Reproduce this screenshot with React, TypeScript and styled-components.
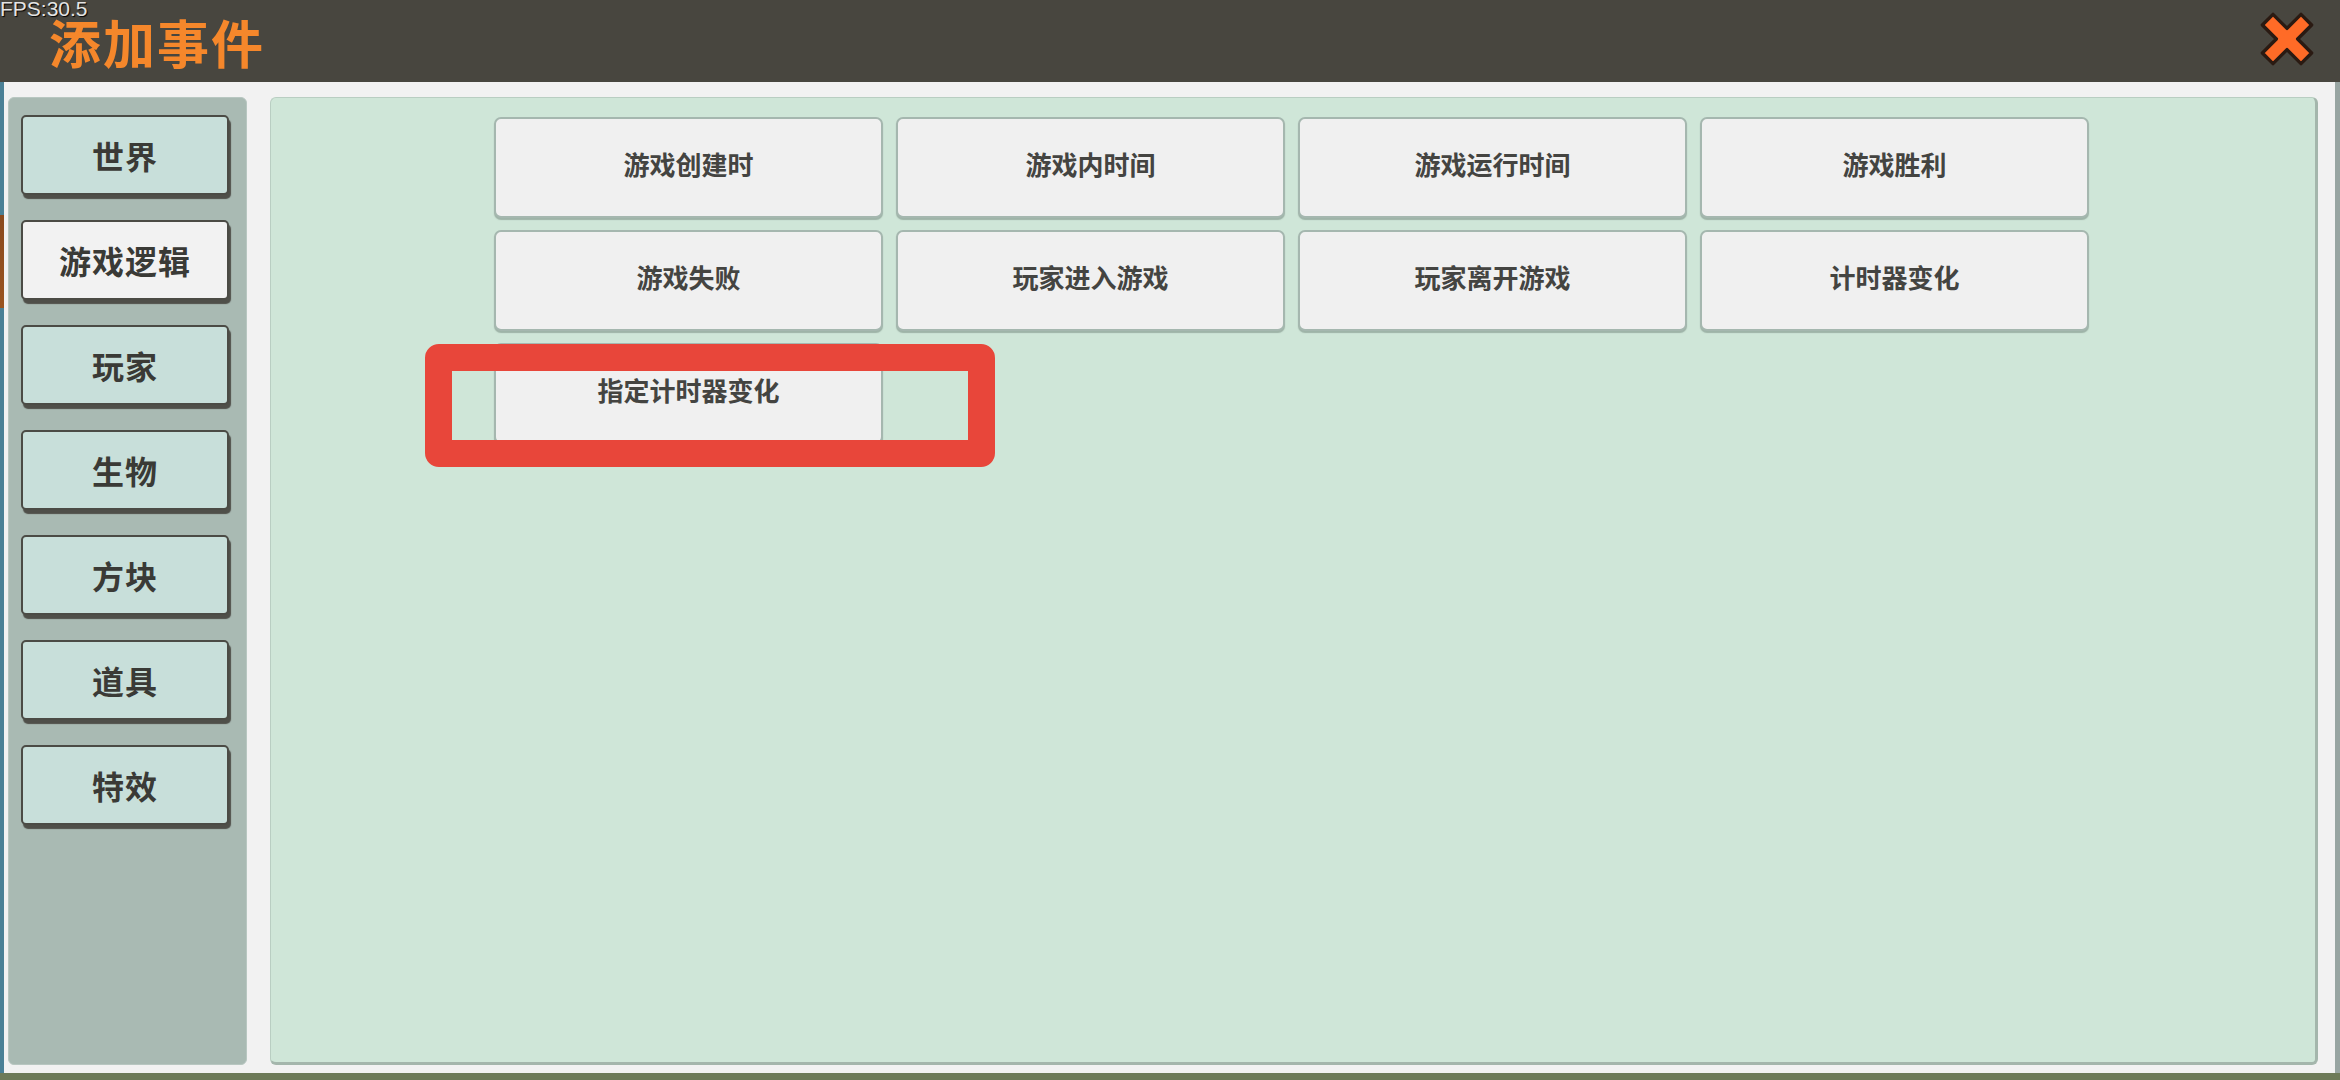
import React from 'react';
import styled, { createGlobalStyle } from 'styled-components';

const GlobalStyle = createGlobalStyle`
  html, body {
    margin: 0;
    padding: 0;
  }
  body {
    width: 2340px;
    height: 1080px;
    overflow: hidden;
    font-family: "Noto Sans CJK SC", "Noto Sans", sans-serif;
  }
`

const Page = styled.div`
  position: relative;
  width: 2340px;
  height: 1080px;
  display: flex;
  flex-direction: column;

  background:
    linear-gradient(to bottom, transparent 1073px, #6d7a58 1073px),
    linear-gradient(to right, transparent 2335px, #98a5a2 2335px),
    linear-gradient(to bottom, #4a8096 0, #4a8096 215px, #8a4a1e 215px, #9a5420 308px, #4a8096 308px);
`

const Fps = styled.div`
  position: absolute;
  left: 0;
  top: -2px;

  font-family: "Liberation Sans", Arial, sans-serif;
  font-size: 21px;
  line-height: 1;
  color: #e4e4e4;
  text-shadow: 1px 1px 1px #000;
`

const Header = styled.div`
  height: 82px;
  flex-shrink: 0;
  display: flex;
  align-items: center;
  justify-content: space-between;
  padding: 0 25px 0 49px;
  box-sizing: border-box;

  background-color: #48463f;
`

const Title = styled.div`
  font-size: 52px;
  font-weight: 700;
  line-height: 0.75;
  letter-spacing: 2px;
  color: #f5872b;
`

const CloseBtn = styled.svg`
  width: 56px;
  height: 58px;
  margin-top: -4px;
`

const Frame = styled.div`
  flex: 1;
  display: flex;
  gap: 23px;
  margin: 0 5px 7px 4px;
  padding: 15px 17px 8px 4px;

  background-color: #f2f2f2;
`

const SidePanel = styled.div`
  width: 239px;
  flex-shrink: 0;
  display: flex;
  flex-direction: column;
  gap: 25px;
  padding: 17px 0 0 12px;
  box-sizing: border-box;

  background-color: #a9bab3;
  border: 1px solid #b8c7c1;
  border-radius: 6px;
`

const SideButton = styled.div<{ $active?: boolean }>`
  width: 208px;
  height: 80px;
  display: flex;
  align-items: center;
  justify-content: center;
  box-sizing: border-box;

  background-color: ${p => (p.$active ? '#f2f2f2' : '#c8dfda')};
  border: 2px solid #4b4b45;
  border-radius: 5px;
  box-shadow: 2px 4px 1px #4f4f49;

  font-size: 32px;
  font-weight: 700;
  color: #3a3a36;
  letter-spacing: 1px;
`

const Content = styled.div`
  position: relative;
  flex: 1;
  padding: 19px 0 0 223px;
  box-sizing: border-box;

  background-color: #cfe6d8;
  border: 1px solid #b9cec2;
  border-right: 3px solid #a4b6ac;
  border-bottom: 3px solid #a4b6ac;
  border-radius: 6px;
`

const EventGrid = styled.div`
  display: grid;
  grid-template-columns: repeat(4, 389px);
  grid-auto-rows: 101px;
  column-gap: 13px;
  row-gap: 12px;
`

const EventButton = styled.div`
  display: flex;
  align-items: center;
  justify-content: center;
  padding-bottom: 8px;
  box-sizing: border-box;

  background-color: #f0f0f0;
  border: 2px solid #a5b7af;
  border-radius: 7px;
  box-shadow: 0 2px 1px rgba(110, 130, 120, 0.5);

  font-size: 26px;
  font-weight: 700;
  color: #444441;
`

const Highlight = styled.div`
  position: absolute;
  left: 154px;
  top: 246px;
  width: 570px;
  height: 123px;
  box-sizing: border-box;

  border: 27px solid #e8463a;
  border-radius: 14px;
`

const categories = ['世界', '游戏逻辑', '玩家', '生物', '方块', '道具', '特效']

const events = [
  '游戏创建时',
  '游戏内时间',
  '游戏运行时间',
  '游戏胜利',
  '游戏失败',
  '玩家进入游戏',
  '玩家离开游戏',
  '计时器变化',
  '指定计时器变化',
]

export default function App() {
  return (
    <>
      <GlobalStyle />
      <Page>
        <Header>
          <Title>添加事件</Title>
          <CloseBtn viewBox="0 0 100 100">
            <polygon
              points="25,6 50,31 75,6 94,25 69,50 94,75 75,94 50,69 25,94 6,75 31,50 6,25"
              fill="#ff6b27"
              stroke="#2a1a12"
              strokeWidth="6"
              strokeLinejoin="round"
            />
          </CloseBtn>
        </Header>
        <Frame>
          <SidePanel>
            {categories.map(c => (
              <SideButton key={c} $active={c === '游戏逻辑'}>{c}</SideButton>
            ))}
          </SidePanel>
          <Content>
            <EventGrid>
              {events.map(e => (
                <EventButton key={e}>{e}</EventButton>
              ))}
            </EventGrid>
            <Highlight />
          </Content>
        </Frame>
        <Fps>FPS:30.5</Fps>
      </Page>
    </>
  );
}
